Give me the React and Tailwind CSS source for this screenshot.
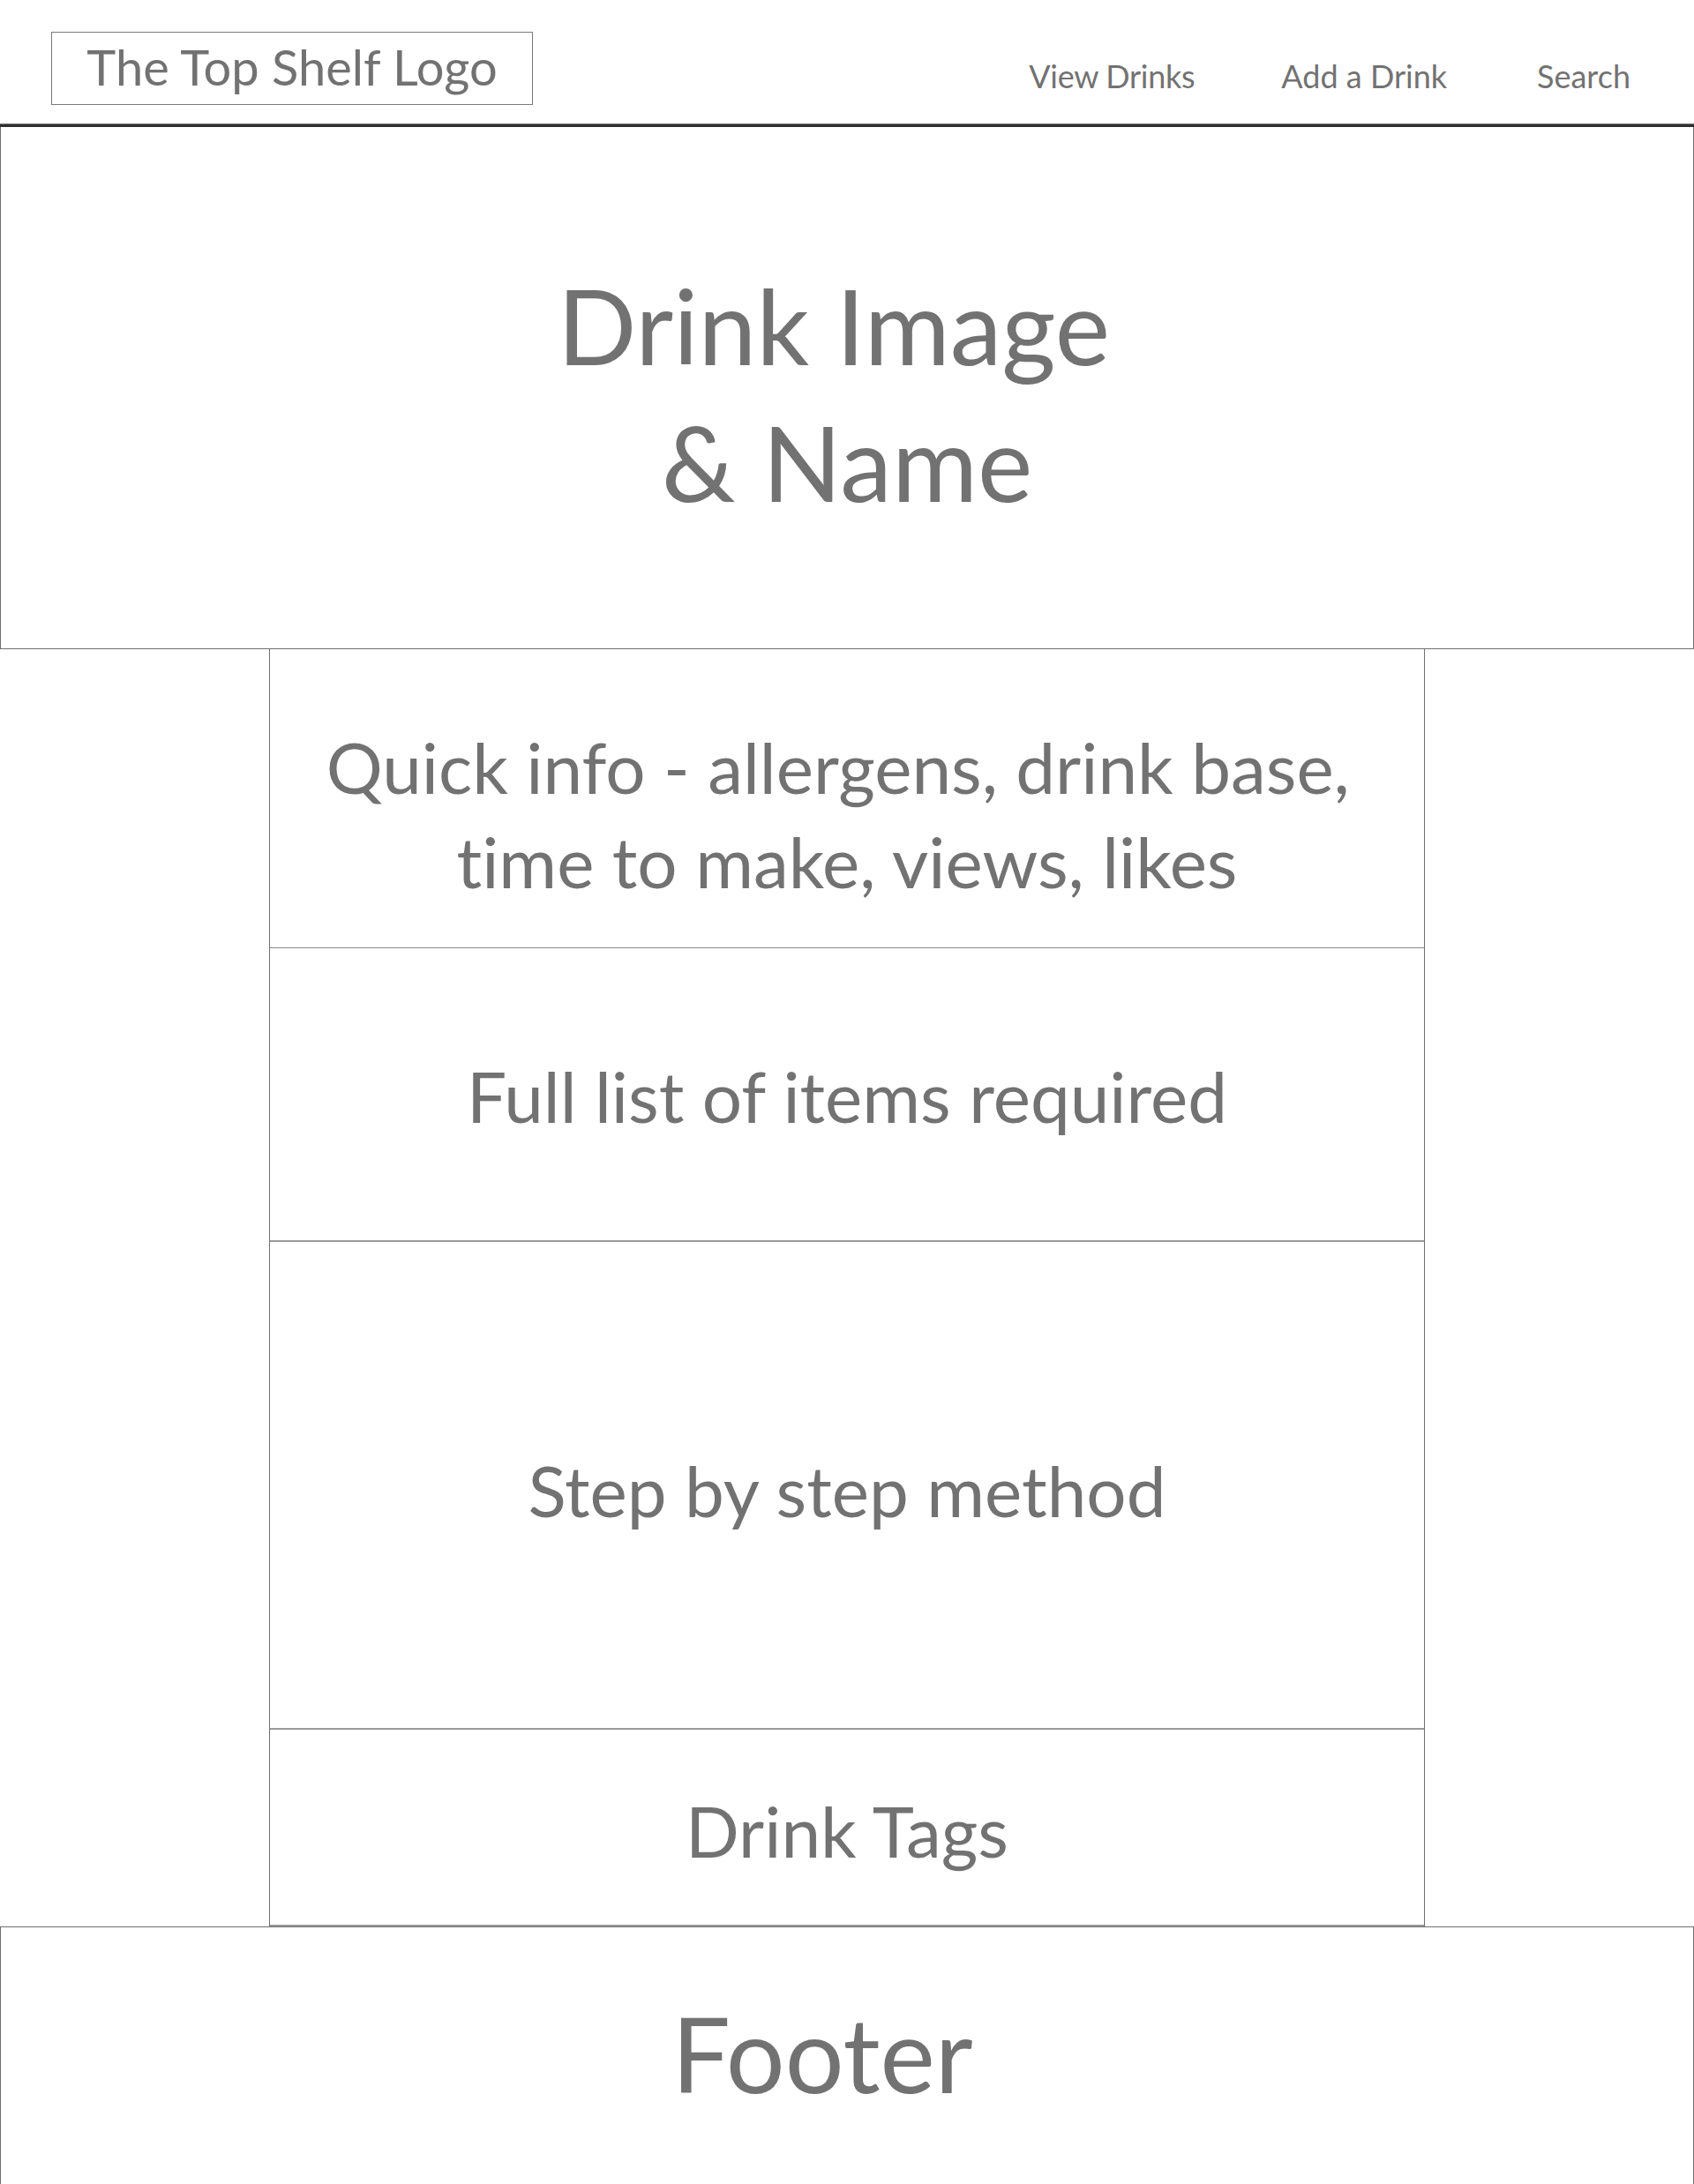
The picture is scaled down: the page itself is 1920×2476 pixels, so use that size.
export default function App() {
  return (
    <div className="w-[1920px] h-[2476px] bg-white font-['Lato','Open_Sans',sans-serif] [font-variant-ligatures:none] text-[#727272] overflow-hidden flex flex-col">
      <header className="h-[140px] flex items-start shrink-0">
        <div className="ml-[58px] mt-[36px] w-[546px] h-[83px] border border-[#7a7a7a] flex items-center justify-center pb-[4px] text-[56px] leading-[75px]">
          The Top Shelf Logo
        </div>
        <nav className="ml-auto mr-[72px] mt-[62px] flex text-[36px] leading-[48px]">
          <span className="tracking-[-0.3px]">View Drinks</span>
          <span className="ml-[98px]">Add a Drink</span>
          <span className="ml-[102px]">Search</span>
        </nav>
      </header>
      <div className="h-[4px] shrink-0 border-t border-[#777] bg-[#2f2f2f]"></div>
      <section className="h-[592px] shrink-0 border-l border-r border-b border-[#707070] flex items-center justify-center pt-[12px] text-center text-[118px] leading-[155px]">
        <div>
          Drink Image{"\u00a0"}
          <br />
          &amp; Name
        </div>
      </section>
      <main className="w-[1310px] mx-auto shrink-0 border-l border-r border-[#707070] flex flex-col text-center text-[80px] leading-[107px]">
        <div className="h-[339px] border-b border-[#8a8a8a] pt-[80px]">
          Quick info - allergens, drink base,{"\u00a0"}
          <br />
          time to make, views, likes
        </div>
        <div className="h-[333px] border-b-2 border-[#9a9a9a] flex items-center justify-center pt-[3px]">
          Full list of items required
        </div>
        <div className="h-[553px] border-b-2 border-[#9a9a9a] flex items-center justify-center pt-[12px]">
          Step by step method
        </div>
        <div className="h-[223px] border-b-2 border-[#9a9a9a] flex items-center justify-center pt-[8px]">
          Drink Tags
        </div>
      </main>
      <footer className="flex-1 border-t border-l border-r border-[#707070] pt-[65px] pr-[56px] text-center text-[118px] leading-[155px]">
        Footer
      </footer>
    </div>
  );
}
